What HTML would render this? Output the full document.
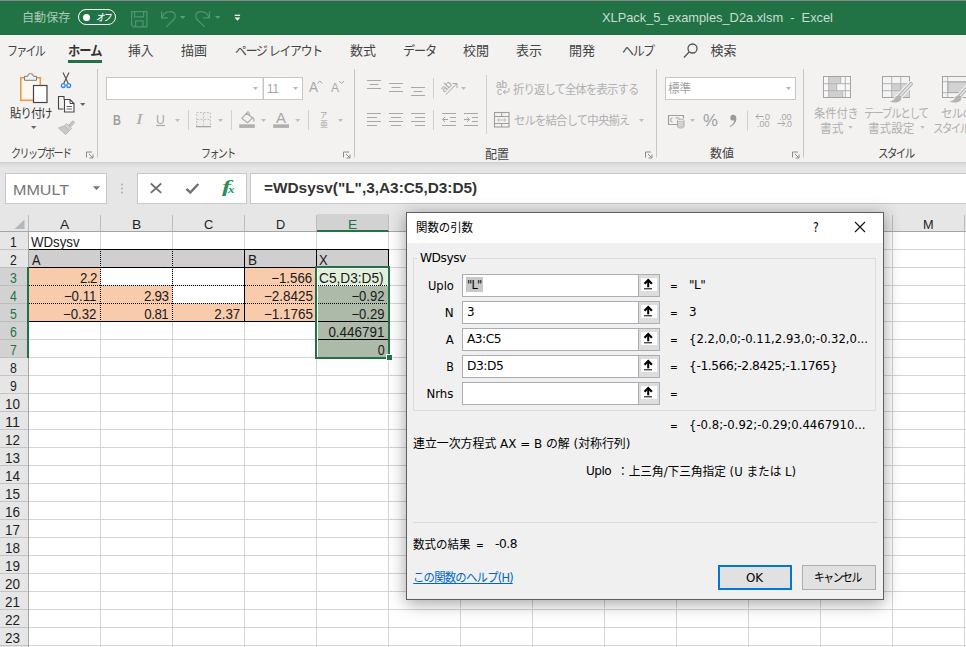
<!DOCTYPE html>
<html lang="ja">
<head>
<meta charset="utf-8">
<title>XLPack_5_examples_D2a.xlsm - Excel</title>
<style>
*{box-sizing:border-box;margin:0;padding:0}
html,body{width:966px;height:647px;overflow:hidden;background:#fff}
body{font-family:"Liberation Sans","Noto Sans CJK JP",sans-serif;font-size:12px;color:#222;position:relative}
.a{position:absolute}
.t{position:absolute;white-space:nowrap}
svg{position:absolute;overflow:visible}
.dj{font-family:"DejaVu Sans","Noto Sans CJK JP",sans-serif}
</style>
</head>
<body>
<div class="a" style="left:0;top:0;width:966px;height:35px;background:#217346;border-top:1px solid #8a8888"></div>
<div class="t" style="left:22.3px;top:11.5px;font-size:12px;line-height:12px;color:#a9cab8;transform:scaleX(1.01);transform-origin:0 50%;">自動保存</div>
<div class="a" style="left:78px;top:9px;width:38px;height:16px;border:1px solid #fff;border-radius:8px"></div>
<div class="a" style="left:82.500px;top:13.500px;width:7px;height:7px;border-radius:4px;background:#fff"></div>
<div class="t" style="left:95.8px;top:12.5px;font-size:10px;line-height:10px;color:#fff;letter-spacing:-1.6px;transform:scaleX(0.833);transform-origin:0 50%;font-style:italic;font-weight:500;">オフ</div>
<svg style="left:0;top:0" width="260" height="35" viewBox="0 0 260 35" fill="none" stroke="#4f9671" stroke-width="1.200">
<path d="M131.600 11.700h15.300v15.200h-13.300l-2-2z"/><path d="M134.600 11.700v5.200h9v-5.200M135.600 26.900v-6h7.400v6"/>
<path d="M161.600 11.400v6.400h6.300M162 17.400C163.500 13.800 167 11.700 170 11.700C173 11.700 175.200 13.300 175.200 16C175.200 18 174.300 19.300 173 20.500L166.200 26.900"/>
<path d="M180 16h5.400l-2.700 2.900z" fill="#5a9d7c" stroke="none"/>
<path d="M209.500 11.400v6.400h-6.300M209.100 17.400C207.500 13.800 204 11.700 201 11.700C198 11.700 195.800 13.300 195.800 16C195.800 18 196.700 19.300 198 20.500L204.800 26.900"/>
<path d="M215 16h5.400l-2.700 2.900z" fill="#5a9d7c" stroke="none"/>
<path d="M234.700 15.300h5.400" stroke="#fff" stroke-width="1.200"/><path d="M234.500 17.500h5.800l-2.900 3.300z" fill="#fff" stroke="none"/>
</svg>
<div class="t" style="left:602px;top:10.75px;font-size:13.5px;line-height:13.5px;color:#c9ddd1;transform:scaleX(0.95);transform-origin:0 50%;">XLPack_5_examples_D2a.xlsm&nbsp; -&nbsp; Excel</div>
<div class="a" style="left:0;top:35px;width:966px;height:127px;background:#f3f2f1"></div>
<div class="t" style="left:7px;top:43.5px;font-size:13px;line-height:13px;color:#444;letter-spacing:-2.08px;transform:scaleX(0.847);transform-origin:0 50%;">ファイル</div>
<div class="t" style="left:68px;top:43.5px;font-size:13px;line-height:13px;color:#333;letter-spacing:-1.025px;transform:scaleX(0.942);transform-origin:0 50%;font-weight:bold;">ホーム</div>
<div class="a" style="left:68px;top:60px;width:34px;height:3px;background:#217346"></div>
<div class="t" style="left:128px;top:43.5px;font-size:13px;line-height:13px;color:#444;transform:scaleX(0.98);transform-origin:0 50%;">挿入</div>
<div class="t" style="left:181px;top:43.5px;font-size:13px;line-height:13px;color:#444;">描画</div>
<div class="t" style="left:235px;top:43.5px;font-size:13px;line-height:13px;color:#444;letter-spacing:-1.357px;transform:scaleX(0.914);transform-origin:0 50%;">ページ レイアウト</div>
<div class="t" style="left:350px;top:43.5px;font-size:13px;line-height:13px;color:#444;">数式</div>
<div class="t" style="left:403px;top:43.5px;font-size:13px;line-height:13px;color:#444;letter-spacing:-1.203px;transform:scaleX(0.932);transform-origin:0 50%;">データ</div>
<div class="t" style="left:463px;top:43.5px;font-size:13px;line-height:13px;color:#444;">校閲</div>
<div class="t" style="left:516px;top:43.5px;font-size:13px;line-height:13px;color:#444;">表示</div>
<div class="t" style="left:569px;top:43.5px;font-size:13px;line-height:13px;color:#444;">開発</div>
<div class="t" style="left:622px;top:43.5px;font-size:13px;line-height:13px;color:#444;letter-spacing:-1.403px;transform:scaleX(0.919);transform-origin:0 50%;">ヘルプ</div>
<svg style="left:682px;top:42px" width="18" height="18" viewBox="0 0 18 18" fill="none" stroke="#555" stroke-width="1.300"><circle cx="10.500" cy="6.500" r="4.500"/><path d="M7.300 9.700L2 15.500"/></svg>
<div class="t" style="left:710.5px;top:43.5px;font-size:13px;line-height:13px;color:#444;">検索</div>
<svg style="left:0;top:0" width="966" height="170" viewBox="0 0 966 170">
<rect x="20.800" y="77.800" width="19.500" height="22.500" fill="#fcf7f1" stroke="#ee9a45" stroke-width="1.600"/>
<path d="M24.500 80.300v-4h3.200a2.800 2.800 0 0 1 5.600 0h3.200v4z" fill="#f3f2f1" stroke="#7a7a7a" stroke-width="1"/>
<rect x="33.500" y="85.500" width="13.500" height="17" fill="#fff" stroke="#444" stroke-width="1.200"/>
<path d="M31 126h5.4l-2.7 3z" fill="#666" stroke="none"/>
<path d="M63 72.500l5.300 11M69 72.500l-5.300 11" stroke="#555" stroke-width="1.200" fill="none"/>
<circle cx="63.300" cy="85.600" r="1.900" fill="none" stroke="#2e8bdc" stroke-width="1.300"/><circle cx="68.700" cy="85.600" r="1.900" fill="none" stroke="#2e8bdc" stroke-width="1.300"/>
<path d="M64 99.500v-3h-5.500v12.500h5" fill="none" stroke="#444" stroke-width="1.100"/>
<path d="M64.500 99.500h5.500l4 4v8.500h-9.500z" fill="#fff" stroke="#444" stroke-width="1.100"/>
<path d="M70 99.500v4h4" fill="none" stroke="#444" stroke-width="1"/>
<path d="M66.5 106.5H72" stroke="#666" stroke-width="1" fill="none"/><path d="M66.5 109H72" stroke="#666" stroke-width="1" fill="none"/>
<path d="M80 103h5.4l-2.7 3z" fill="#666" stroke="none"/>
<path d="M72.800 120.800l-4.200 4.300 1.800 1.800 4.300-4.200z" fill="#c4c4c4" stroke="#b0b0b0" stroke-width="0.800"/>
<path d="M66.500 123.500l5 5-1.800 1.800-5-5z" fill="#d6d6d6" stroke="#b0b0b0" stroke-width="0.800"/>
<path d="M64.300 125.800l-5.800 2.200 7 6.500 3.800-3.700z" fill="#c9c9c9" stroke="#b0b0b0" stroke-width="0.800"/>
<path d="M86.5 157.5v-5.500h5.500" fill="none" stroke="#8a8a8a" stroke-width="1"/><path d="M89 154l3.500 3.500m0.500 -3v3.500h-3.500" fill="none" stroke="#8a8a8a" stroke-width="1"/>
<path d="M97.5 69V157.5" stroke="#c8c6c4" stroke-width="1" fill="none"/>
<rect x="106.500" y="77.500" width="156.500" height="22" fill="#fff" stroke="#c6c6c6"/>
<rect x="263.500" y="77.500" width="39" height="22" fill="#fff" stroke="#c6c6c6"/>
<path d="M253 87h5l-2.5 3z" fill="#b5b5b5" stroke="none"/>
<path d="M293 87h5l-2.5 3z" fill="#b5b5b5" stroke="none"/>
<path d="M317.500 83.500l2.400-2.600 2.400 2.600" fill="none" stroke="#a8a8a8" stroke-width="1"/>
<path d="M339.200 81l2.400 2.600 2.400-2.600" fill="none" stroke="#a8a8a8" stroke-width="1"/>
<path d="M156.2 125.5H165" stroke="#a8a8a8" stroke-width="1.2" fill="none"/>
<path d="M175 119h5l-2.5 3z" fill="#bdbdbd" stroke="none"/>
<path d="M188.5 110V130" stroke="#d2d0ce" stroke-width="1" fill="none"/>
<rect x="196.500" y="112.500" width="14" height="14" fill="#eeedec" stroke="#c4c4c4" stroke-width="1" stroke-dasharray="2 1.500"/>
<path d="M203.500 113v13M197 119.500h13" stroke="#c4c4c4" stroke-width="1" stroke-dasharray="2 1.500" fill="none"/>
<path d="M196 126.7H211" stroke="#a0a0a0" stroke-width="1.2" fill="none"/>
<path d="M218 119h5l-2.5 3z" fill="#bdbdbd" stroke="none"/>
<path d="M231.5 110V130" stroke="#d2d0ce" stroke-width="1" fill="none"/>
<path d="M241.800 118.400l4.700-5.100 6 4.500-4.900 4.900z" fill="none" stroke="#a8a8a8" stroke-width="1.100" stroke-linejoin="round"/>
<path d="M246.700 114.800v-1.700a1.300 1.300 0 0 1 2.600 0v2.200" fill="none" stroke="#a8a8a8" stroke-width="1"/>
<path d="M252.600 117.600c1.300.9 1.700 2.200 1.300 3.900" fill="none" stroke="#a8a8a8" stroke-width="1.200"/>
<rect x="239.200" y="124.300" width="15.600" height="3.600" fill="#b1afad"/>
<path d="M261 119h5l-2.5 3z" fill="#bdbdbd" stroke="none"/>
<rect x="273.200" y="124.300" width="15.800" height="3.600" fill="#b1afad"/>
<path d="M295.2 119h5l-2.5 3z" fill="#bdbdbd" stroke="none"/>
<path d="M308.5 110V130" stroke="#d2d0ce" stroke-width="1" fill="none"/>
<path d="M338 119h5l-2.5 3z" fill="#bdbdbd" stroke="none"/>
<path d="M343.5 157.5v-5.500h5.500" fill="none" stroke="#8a8a8a" stroke-width="1"/><path d="M346 154l3.500 3.500m0.500 -3v3.500h-3.500" fill="none" stroke="#8a8a8a" stroke-width="1"/>
<path d="M354.5 69V157.5" stroke="#c8c6c4" stroke-width="1" fill="none"/>
</svg>
<div class="t" style="left:10px;top:107.5px;font-size:12px;line-height:12px;color:#333;letter-spacing:-0.932px;transform:scaleX(0.944);transform-origin:0 50%;">貼り付け</div>
<div class="t" style="left:11px;top:148px;font-size:12px;line-height:12px;color:#444;letter-spacing:-1.92px;transform:scaleX(0.842);transform-origin:0 50%;">クリップボード</div>
<div class="t" style="left:266.8px;top:82.5px;font-size:12px;line-height:12px;color:#a3a3a3;transform:scaleX(0.962);transform-origin:0 50%;">11</div>
<div class="t" style="left:309.4px;top:80.3px;font-size:14px;line-height:14px;color:#a8a8a8;transform:scaleX(0.963);transform-origin:0 50%;">A</div>
<div class="t" style="left:331px;top:81.55px;font-size:12.5px;line-height:12.5px;color:#a8a8a8;transform:scaleX(0.959);transform-origin:0 50%;">A</div>
<div class="t" style="left:113.3px;top:112.8px;font-size:14px;line-height:14px;color:#a0a0a0;transform:scaleX(0.78);transform-origin:0 50%;font-weight:bold;">B</div>
<div class="t" style="left:136px;top:112.8px;font-size:14px;line-height:14px;color:#a8a8a8;transform:scaleX(1.413);transform-origin:0 50%;font-family:'Liberation Serif',serif;font-style:italic;">I</div>
<div class="t" style="left:156.2px;top:112.55px;font-size:13.5px;line-height:13.5px;color:#a8a8a8;transform:scaleX(0.903);transform-origin:0 50%;">U</div>
<div class="t" style="left:276px;top:110.55px;font-size:14.5px;line-height:14.5px;color:#a8a8a8;transform:scaleX(1.034);transform-origin:0 50%;">A</div>
<div class="t" style="left:320.3px;top:111.25px;font-size:8.5px;line-height:8.5px;color:#a8a8a8;transform:scaleX(0.857);transform-origin:0 50%;">ア</div>
<div class="t" style="left:319.8px;top:119.55px;font-size:8.5px;line-height:8.5px;color:#a8a8a8;transform:scaleX(0.939);transform-origin:0 50%;">亜</div>
<div class="t" style="left:201.2px;top:148px;font-size:12px;line-height:12px;color:#444;letter-spacing:-1.92px;transform:scaleX(0.833);transform-origin:0 50%;">フォント</div>
<svg style="left:0;top:0" width="966" height="170" viewBox="0 0 966 170">
<path d="M367 80.5H381" stroke="#a8a8a8" stroke-width="1" fill="none"/><path d="M369.5 84.5H378.5" stroke="#a8a8a8" stroke-width="1" fill="none"/><path d="M367 88.5H381" stroke="#a8a8a8" stroke-width="1" fill="none"/>
<path d="M389 83.5H403" stroke="#a8a8a8" stroke-width="1" fill="none"/><path d="M391.5 87.5H400.5" stroke="#a8a8a8" stroke-width="1" fill="none"/><path d="M389 91.5H403" stroke="#a8a8a8" stroke-width="1" fill="none"/>
<path d="M411 87.5H425" stroke="#a8a8a8" stroke-width="1" fill="none"/><path d="M413.5 91.5H422.5" stroke="#a8a8a8" stroke-width="1" fill="none"/><path d="M411 95.5H425" stroke="#a8a8a8" stroke-width="1" fill="none"/>
<path d="M433.5 78V98.5" stroke="#d2d0ce" stroke-width="1" fill="none"/>
<path d="M446 94.500L456.500 84M452.500 83.500h4.500v4.500" fill="none" stroke="#a8a8a8" stroke-width="1"/>
<path d="M461 87h5l-2.5 3z" fill="#bdbdbd" stroke="none"/>
<path d="M367 113.5H381" stroke="#a8a8a8" stroke-width="1" fill="none"/><path d="M367 117.5H377" stroke="#a8a8a8" stroke-width="1" fill="none"/><path d="M367 121.5H381" stroke="#a8a8a8" stroke-width="1" fill="none"/><path d="M367 125.5H377" stroke="#a8a8a8" stroke-width="1" fill="none"/>
<path d="M389 113.5H403" stroke="#a8a8a8" stroke-width="1" fill="none"/><path d="M391 117.5H401" stroke="#a8a8a8" stroke-width="1" fill="none"/><path d="M389 121.5H403" stroke="#a8a8a8" stroke-width="1" fill="none"/><path d="M391 125.5H401" stroke="#a8a8a8" stroke-width="1" fill="none"/>
<path d="M411 113.5H425" stroke="#a8a8a8" stroke-width="1" fill="none"/><path d="M415 117.5H425" stroke="#a8a8a8" stroke-width="1" fill="none"/><path d="M411 121.5H425" stroke="#a8a8a8" stroke-width="1" fill="none"/><path d="M415 125.5H425" stroke="#a8a8a8" stroke-width="1" fill="none"/>
<path d="M433.5 110V130" stroke="#d2d0ce" stroke-width="1" fill="none"/>
<path d="M442 113.5H456" stroke="#a8a8a8" stroke-width="1" fill="none"/><path d="M450 117.5H456" stroke="#a8a8a8" stroke-width="1" fill="none"/><path d="M450 121.5H456" stroke="#a8a8a8" stroke-width="1" fill="none"/><path d="M442 125.5H456" stroke="#a8a8a8" stroke-width="1" fill="none"/>
<path d="M448 119.500h-5.500M445 117l-2.500 2.500 2.500 2.500" fill="none" stroke="#a8a8a8" stroke-width="1"/>
<path d="M464 113.5H478" stroke="#a8a8a8" stroke-width="1" fill="none"/><path d="M472 117.5H478" stroke="#a8a8a8" stroke-width="1" fill="none"/><path d="M472 121.5H478" stroke="#a8a8a8" stroke-width="1" fill="none"/><path d="M464 125.5H478" stroke="#a8a8a8" stroke-width="1" fill="none"/>
<path d="M464 119.500h5.500M467 117l2.500 2.500-2.500 2.500" fill="none" stroke="#a8a8a8" stroke-width="1"/>
<path d="M486.5 75V134" stroke="#d2d0ce" stroke-width="1" fill="none"/>
<path d="M509 88v2.500q0 1.500-1.500 1.500h-4M505.500 90l-2.200 2 2.200 2" fill="none" stroke="#a8a8a8" stroke-width="1"/>
<rect x="494.500" y="112.500" width="14.500" height="14.500" fill="none" stroke="#9f9f9f" stroke-width="1.100"/>
<path d="M495 116.500h14M495 123.500h14M501.700 113v3.500M501.700 123.500v3.500" fill="none" stroke="#9f9f9f" stroke-width="1"/>
<path d="M497.500 120h8.500M499.300 118.300l-1.800 1.700 1.800 1.700M504.200 118.300l1.800 1.700-1.800 1.700" fill="none" stroke="#b5b5b5" stroke-width="0.900"/>
<path d="M639 119h5l-2.5 3z" fill="#bdbdbd" stroke="none"/>
<path d="M645.5 157.5v-5.500h5.500" fill="none" stroke="#8a8a8a" stroke-width="1"/><path d="M648 154l3.500 3.500m0.500 -3v3.500h-3.500" fill="none" stroke="#8a8a8a" stroke-width="1"/>
<path d="M656.5 69V157.5" stroke="#c8c6c4" stroke-width="1" fill="none"/>
<rect x="665.500" y="77.500" width="130" height="22" fill="#fff" stroke="#c6c6c6"/>
<path d="M786 87h5l-2.5 3z" fill="#b5b5b5" stroke="none"/>
<path d="M677 124.500h-8.500v-9h15v3" fill="none" stroke="#9f9f9f" stroke-width="1.200"/>
<path d="M672.500 118a2 2 0 0 0 0 4M675.500 118h4" fill="none" stroke="#9f9f9f" stroke-width="1"/>
<path d="M677.500 120.500v6c0 .9 1.500 1.500 3.300 1.500s3.200-.6 3.200-1.500v-6" fill="#e6e6e6" stroke="#a8a8a8" stroke-width="0.900"/>
<ellipse cx="680.700" cy="120.500" rx="3.200" ry="1.300" fill="#ededed" stroke="#a8a8a8" stroke-width="0.900"/>
<path d="M677.500 122.700c0 .9 1.500 1.400 3.300 1.400s3.200-.5 3.200-1.400M677.500 124.900c0 .9 1.500 1.400 3.300 1.400s3.200-.5 3.200-1.400" fill="none" stroke="#a8a8a8" stroke-width="0.800"/>
<path d="M690 119h5l-2.5 3z" fill="#bdbdbd" stroke="none"/>
<path d="M733.200 114.800a2.900 2.900 0 1 0 0 5.800c.4 0 .8-.1 1.100-.2c-.3 2.300-1.900 4.300-4.600 5.800l.5.800c4-1.800 6.200-5 6.200-8.400c0-2.300-1.300-3.800-3.200-3.800z" fill="#9a9a9a"/>
<path d="M747.5 110.5V130.5" stroke="#d2d0ce" stroke-width="1" fill="none"/>
<path d="M763.500 116.500h-7.500M758.700 113.800l-2.700 2.700 2.700 2.700" fill="none" stroke="#a8a8a8" stroke-width="1"/>
<path d="M777.500 123.500h7.500M782.300 120.800l2.700 2.700-2.700 2.700" fill="none" stroke="#a8a8a8" stroke-width="1"/>
<path d="M792.5 157.5v-5.500h5.500" fill="none" stroke="#8a8a8a" stroke-width="1"/><path d="M795 154l3.500 3.500m0.500 -3v3.500h-3.500" fill="none" stroke="#8a8a8a" stroke-width="1"/>
<path d="M803.5 69V157.5" stroke="#c8c6c4" stroke-width="1" fill="none"/>
<rect x="823.500" y="76.500" width="27" height="21" fill="#f7f7f7" stroke="#a3a3a3" stroke-width="1"/>
<rect x="829" y="77" width="11.500" height="6.500" fill="#cfcfcf"/><rect x="829" y="84" width="7.500" height="6.500" fill="#cfcfcf"/><rect x="829" y="91" width="13.500" height="6" fill="#cfcfcf"/>
<path d="M824 83.700h27M824 90.700h27M828.700 77v20.500M845.300 77v20.500M840.700 77v6.500M836.700 84v6.500M842.700 91v6.500" fill="none" stroke="#adadad" stroke-width="0.900"/>
<path d="M848.2 126h4.6l-2.3 2.8z" fill="#bdbdbd" stroke="none"/>
<rect x="882.500" y="76.500" width="27" height="21" fill="#f3f3f3" stroke="#a3a3a3" stroke-width="1"/>
<rect x="892" y="84" width="9" height="6.500" fill="#cfcfcf"/><rect x="901" y="84" width="8.500" height="13" fill="#d6d6d6"/><rect x="892" y="91" width="9" height="6" fill="#dedede"/>
<path d="M883 83.700h27M883 90.700h27M891.700 77v20.500M900.700 77v20.500" fill="none" stroke="#adadad" stroke-width="0.900"/>
<g transform="translate(0 0)"><path d="M911 84L899.500 96.300" stroke="#f3f2f1" stroke-width="6.200" stroke-linecap="round" fill="none"/><path d="M899.800 95.600c-2.500-.6-4.300.6-5 2.300c-.8 2-1.800 2.800-5.800 3.400c4.500 1.800 9 1.500 11.200-.6c1.500-1.500 1.700-3.600-.4-5.100z" fill="#f3f2f1" stroke="#f3f2f1" stroke-width="2"/><path d="M911 84L899.500 96.300" stroke="#a9a9a9" stroke-width="3.600" stroke-linecap="round" fill="none"/><path d="M911 84L900 95.800" stroke="#e2e2e2" stroke-width="1.900" stroke-linecap="round" fill="none"/><path d="M899.800 95.600c-2.500-.6-4.300.6-5 2.300c-.8 2-1.800 2.800-5.800 3.400c4.500 1.800 9 1.500 11.200-.6c1.500-1.500 1.700-3.600-.4-5.100z" fill="#b4b4b4"/></g>
<path d="M920.3 126h4.6l-2.3 2.8z" fill="#bdbdbd" stroke="none"/>
<rect x="942.500" y="76.500" width="27.500" height="21" fill="#f3f3f3" stroke="#a3a3a3" stroke-width="1"/>
<rect x="948" y="82" width="20" height="10.500" fill="#d2d2d2" stroke="#adadad" stroke-width="0.900"/>
<path d="M943 81.700h27M943 92.700h27M947.700 77v20.500" fill="none" stroke="#adadad" stroke-width="0.900"/>
<g transform="translate(60 0)"><path d="M911 84L899.500 96.300" stroke="#f3f2f1" stroke-width="6.200" stroke-linecap="round" fill="none"/><path d="M899.800 95.600c-2.500-.6-4.300.6-5 2.300c-.8 2-1.800 2.800-5.800 3.400c4.500 1.800 9 1.500 11.200-.6c1.500-1.500 1.700-3.600-.4-5.100z" fill="#f3f2f1" stroke="#f3f2f1" stroke-width="2"/><path d="M911 84L899.500 96.300" stroke="#a9a9a9" stroke-width="3.600" stroke-linecap="round" fill="none"/><path d="M911 84L900 95.800" stroke="#e2e2e2" stroke-width="1.900" stroke-linecap="round" fill="none"/><path d="M899.800 95.600c-2.500-.6-4.300.6-5 2.300c-.8 2-1.800 2.800-5.800 3.400c4.500 1.800 9 1.500 11.200-.6c1.500-1.500 1.700-3.600-.4-5.100z" fill="#b4b4b4"/></g>
</svg>
<div class="t" style="left:439.500px;top:80.500px;font-size:10.500px;line-height:10.500px;color:#a8a8a8;transform:rotate(-45deg);transform-origin:50% 50%">ab</div>
<div class="t" style="left:496.4px;top:78.75px;font-size:10.5px;line-height:10.5px;color:#a8a8a8;transform:scaleX(0.958);transform-origin:0 50%;">ab</div>
<div class="t" style="left:496.6px;top:86.35px;font-size:10.5px;line-height:10.5px;color:#a8a8a8;transform:scaleX(0.952);transform-origin:0 50%;">c</div>
<div class="t" style="left:513.2px;top:84px;font-size:12px;line-height:12px;color:#b0b0b0;letter-spacing:-0.908px;transform:scaleX(0.945);transform-origin:0 50%;">折り返して全体を表示する</div>
<div class="t" style="left:513.5px;top:115px;font-size:12px;line-height:12px;color:#b0b0b0;letter-spacing:-0.881px;transform:scaleX(0.947);transform-origin:0 50%;">セルを結合して中央揃え</div>
<div class="t" style="left:485px;top:148.5px;font-size:12px;line-height:12px;color:#444;">配置</div>
<div class="t" style="left:668.2px;top:83px;font-size:12px;line-height:12px;color:#a3a3a3;transform:scaleX(0.966);transform-origin:0 50%;">標準</div>
<div class="t" style="left:702.7px;top:111.5px;font-size:17px;line-height:17px;color:#9f9f9f;transform:scaleX(0.985);transform-origin:0 50%;">%</div>
<div class="t" style="left:762px;top:111.55px;font-size:9.5px;line-height:9.5px;color:#a8a8a8;transform:scaleX(1.008);transform-origin:0 50%;">.0</div>
<div class="t" style="left:757.3px;top:119.45px;font-size:9.5px;line-height:9.5px;color:#a8a8a8;transform:scaleX(0.961);transform-origin:0 50%;">.00</div>
<div class="t" style="left:779.3px;top:111.55px;font-size:9.5px;line-height:9.5px;color:#a8a8a8;transform:scaleX(0.961);transform-origin:0 50%;">.00</div>
<div class="t" style="left:785.3px;top:119.45px;font-size:9.5px;line-height:9.5px;color:#a8a8a8;letter-spacing:-0.371px;transform:scaleX(0.931);transform-origin:0 50%;">.0</div>
<div class="t" style="left:710px;top:148.4px;font-size:12px;line-height:12px;color:#444;">数値</div>
<div class="t" style="left:814.1px;top:108.2px;font-size:12px;line-height:12px;color:#b0b0b0;transform:scaleX(0.933);transform-origin:0 50%;">条件付き</div>
<div class="t" style="left:820.3px;top:123.2px;font-size:12px;line-height:12px;color:#b0b0b0;transform:scaleX(0.979);transform-origin:0 50%;">書式</div>
<div class="t" style="left:864.4px;top:108.2px;font-size:12px;line-height:12px;color:#b0b0b0;letter-spacing:-1.656px;transform:scaleX(0.892);transform-origin:0 50%;">テーブルとして</div>
<div class="t" style="left:868.4px;top:123.2px;font-size:12px;line-height:12px;color:#b0b0b0;transform:scaleX(0.966);transform-origin:0 50%;">書式設定</div>
<div class="t" style="left:941.3px;top:108.2px;font-size:12px;line-height:12px;color:#b0b0b0;letter-spacing:-0.763px;transform:scaleX(0.955);transform-origin:0 50%;">セルの</div>
<div class="t" style="left:933.2px;top:123.2px;font-size:12px;line-height:12px;color:#b0b0b0;letter-spacing:-1.862px;transform:scaleX(0.878);transform-origin:0 50%;">スタイル</div>
<div class="t" style="left:878.2px;top:148.2px;font-size:12px;line-height:12px;color:#444;letter-spacing:-1.862px;transform:scaleX(0.878);transform-origin:0 50%;">スタイル</div>
<div class="a" style="left:0;top:162px;width:966px;height:51px;background:linear-gradient(#cdcdcd 0,#dadada 2px,#e3e3e3 5px,#e6e6e6 7px)"></div>
<div class="a" style="left:5px;top:173px;width:102px;height:31px;background:#fff;border:1px solid #c8c8c8"></div>
<div class="t" style="left:13px;top:182.95px;font-size:14.5px;line-height:14.5px;color:#767676;transform:scaleX(1.109);transform-origin:0 50%;">MMULT</div>
<div class="a" style="left:137px;top:173px;width:110px;height:31px;background:#fff;border:1px solid #c8c8c8"></div>
<div class="a" style="left:250px;top:173px;width:720px;height:31px;background:#fff;border:1px solid #c8c8c8"></div>
<svg style="left:0;top:160px" width="300" height="50" viewBox="0 160 300 50">
<path d="M92.800 186.300h7.400l-3.700 3.700z" fill="#777"/>
<circle cx="122" cy="184.500" r="0.900" fill="#aaa"/><circle cx="122" cy="188.500" r="0.900" fill="#aaa"/><circle cx="122" cy="192.500" r="0.900" fill="#aaa"/>
<path d="M150.800 183.500l10.400 9.400M161.200 183.500l-10.400 9.400" stroke="#6e6e6e" stroke-width="1.800" fill="none"/>
<path d="M186.500 188.800l3.800 3.700 8-8.500" stroke="#747474" stroke-width="2.500" fill="none"/>
</svg>
<div class="t" style="left:222.3px;top:179px;font-size:16px;line-height:16px;color:#2e8f5a;transform:scaleX(1.689);transform-origin:0 50%;font-family:'Liberation Serif',serif;font-weight:bold;"><i>f</i></div>
<div class="t" style="left:227.8px;top:184.1px;font-size:11px;line-height:11px;color:#2e8f5a;transform:scaleX(1.182);transform-origin:0 50%;font-family:'Liberation Serif',serif;font-weight:bold;"><i>x</i></div>
<div class="t" style="left:264px;top:179.65px;font-size:15.5px;line-height:15.5px;color:#333;transform:scaleX(0.992);transform-origin:0 50%;font-weight:bold;">=WDsysv("L",3,A3:C5,D3:D5)</div>
<div class="a" style="left:29px;top:232px;width:937px;height:415px;background-color:#fff;background-image:linear-gradient(90deg,transparent 71px,#d4d4d4 71px),linear-gradient(transparent 17px,#d4d4d4 17px);background-size:72px 18px,72px 18px"></div>
<div class="a" style="left:0;top:213px;width:966px;height:19px;background:#e6e6e6;border-bottom:1px solid #a6a6a6"></div>
<div class="a" style="left:0;top:232px;width:29px;height:415px;background-color:#e6e6e6;background-image:linear-gradient(transparent 17px,#c4c4c4 17px);background-size:29px 18px;border-right:1px solid #a6a6a6"></div>
<div class="a" style="left:317px;top:214px;width:72px;height:18px;background:#d2d2d2;border-bottom:2px solid #217346"></div>
<div class="a" style="left:0;top:267px;width:29px;height:91px;background-color:#d2d2d2;background-position:0 1px;background-image:linear-gradient(transparent 17px,#bdbdbd 17px);background-size:29px 18px;border-right:2px solid #217346"></div>
<svg style="left:0;top:205px" width="966" height="442" viewBox="0 205 966 442" shape-rendering="crispEdges">
<path d="M24.500 219.500v9.500h-10z" fill="#b7b7b7" shape-rendering="auto"/>
<path d="M28.5 215V231" stroke="#bdbdbd" stroke-width="1" fill="none"/>
<path d="M100.5 215V231" stroke="#bdbdbd" stroke-width="1" fill="none"/>
<path d="M172.5 215V231" stroke="#bdbdbd" stroke-width="1" fill="none"/>
<path d="M244.5 215V231" stroke="#bdbdbd" stroke-width="1" fill="none"/>
<path d="M316.5 215V231" stroke="#bdbdbd" stroke-width="1" fill="none"/>
<path d="M388.5 215V231" stroke="#bdbdbd" stroke-width="1" fill="none"/>
<path d="M460.5 215V231" stroke="#bdbdbd" stroke-width="1" fill="none"/>
<path d="M532.5 215V231" stroke="#bdbdbd" stroke-width="1" fill="none"/>
<path d="M604.5 215V231" stroke="#bdbdbd" stroke-width="1" fill="none"/>
<path d="M676.5 215V231" stroke="#bdbdbd" stroke-width="1" fill="none"/>
<path d="M748.5 215V231" stroke="#bdbdbd" stroke-width="1" fill="none"/>
<path d="M820.5 215V231" stroke="#bdbdbd" stroke-width="1" fill="none"/>
<path d="M892.5 215V231" stroke="#bdbdbd" stroke-width="1" fill="none"/>
<path d="M964.5 215V231" stroke="#bdbdbd" stroke-width="1" fill="none"/>
<rect x="29" y="250" width="359" height="17" fill="#d0cece"/>
<rect x="29" y="268" width="71" height="53" fill="#f8cbad"/>
<rect x="101" y="286" width="71" height="35" fill="#f8cbad"/>
<rect x="173" y="304" width="71" height="17" fill="#f8cbad"/>
<rect x="245" y="268" width="71" height="53" fill="#f8cbad"/>
<rect x="29" y="286" width="143" height="17" fill="#f8cbad"/>
<rect x="29" y="304" width="286" height="17" fill="#f8cbad"/>
<path d="M29 285.500H316M29 303.500H316" stroke="#000" stroke-width="1" stroke-dasharray="1 1" fill="none"/>
<path d="M100.500 251V321M172.500 251V321" stroke="#000" stroke-width="1" stroke-dasharray="1 1" fill="none"/>
<path d="M29 249.500H389M29 267.500H316M29 321.500H316" stroke="#000" stroke-width="1" fill="none"/>
<path d="M244.500 249V322M316.500 249V268M388.500 249V268" stroke="#000" stroke-width="1" fill="none"/>
<rect x="316" y="267" width="73" height="90.500" fill="#fff"/>
<rect x="318" y="269" width="70" height="16" fill="#e2efda"/>
<rect x="318" y="286" width="70" height="71" fill="#adb9a9"/>
<path d="M318 285.500H388M318 303.500H388" stroke="#000" stroke-width="1" stroke-dasharray="1 1" fill="none"/>
<path d="M318 321.500H388M318 339.500H388" stroke="#000" stroke-width="1" fill="none"/>
<rect x="316" y="267" width="73" height="90.500" fill="none" stroke="#217346" stroke-width="2"/>
<rect x="386" y="354.500" width="6" height="6" fill="#217346" stroke="#fff" stroke-width="1"/>
</svg>
<div class="t" style="left:59.9px;top:217.5px;font-size:13px;line-height:13px;color:#1f1f1f;transform:scaleX(1.061);transform-origin:0 50%;">A</div>
<div class="t" style="left:131.9px;top:217.5px;font-size:13px;line-height:13px;color:#1f1f1f;transform:scaleX(1.061);transform-origin:0 50%;">B</div>
<div class="t" style="left:203.9px;top:217.5px;font-size:13px;line-height:13px;color:#1f1f1f;transform:scaleX(0.98);transform-origin:0 50%;">C</div>
<div class="t" style="left:275.9px;top:217.5px;font-size:13px;line-height:13px;color:#1f1f1f;transform:scaleX(0.98);transform-origin:0 50%;">D</div>
<div class="t" style="left:347.9px;top:217.5px;font-size:13px;line-height:13px;color:#217346;transform:scaleX(1.061);transform-origin:0 50%;">E</div>
<div class="t" style="left:419.9px;top:217.5px;font-size:13px;line-height:13px;color:#1f1f1f;transform:scaleX(1.157);transform-origin:0 50%;">F</div>
<div class="t" style="left:491.9px;top:217.5px;font-size:13px;line-height:13px;color:#1f1f1f;transform:scaleX(0.909);transform-origin:0 50%;">G</div>
<div class="t" style="left:563.9px;top:217.5px;font-size:13px;line-height:13px;color:#1f1f1f;transform:scaleX(0.98);transform-origin:0 50%;">H</div>
<div class="t" style="left:639px;top:217.5px;font-size:13px;line-height:13px;color:#1f1f1f;transform:scaleX(0.828);transform-origin:0 50%;">I</div>
<div class="t" style="left:707.9px;top:217.5px;font-size:13px;line-height:13px;color:#1f1f1f;transform:scaleX(1.415);transform-origin:0 50%;">J</div>
<div class="t" style="left:779.9px;top:217.5px;font-size:13px;line-height:13px;color:#1f1f1f;transform:scaleX(1.061);transform-origin:0 50%;">K</div>
<div class="t" style="left:851.9px;top:217.5px;font-size:13px;line-height:13px;color:#1f1f1f;transform:scaleX(1.272);transform-origin:0 50%;">L</div>
<div class="t" style="left:923.2px;top:217.5px;font-size:13px;line-height:13px;color:#1f1f1f;transform:scaleX(0.978);transform-origin:0 50%;">M</div>
<div class="t" style="left:9.5px;top:234.6px;font-size:14px;line-height:14px;color:#1f1f1f;transform:scaleX(0.872);transform-origin:0 50%;">1</div>
<div class="t" style="left:9.5px;top:252.6px;font-size:14px;line-height:14px;color:#1f1f1f;transform:scaleX(0.872);transform-origin:0 50%;">2</div>
<div class="t" style="left:9.5px;top:270.6px;font-size:14px;line-height:14px;color:#217346;transform:scaleX(0.872);transform-origin:0 50%;">3</div>
<div class="t" style="left:9.5px;top:288.6px;font-size:14px;line-height:14px;color:#217346;transform:scaleX(0.872);transform-origin:0 50%;">4</div>
<div class="t" style="left:9.5px;top:306.6px;font-size:14px;line-height:14px;color:#217346;transform:scaleX(0.872);transform-origin:0 50%;">5</div>
<div class="t" style="left:9.5px;top:324.6px;font-size:14px;line-height:14px;color:#217346;transform:scaleX(0.872);transform-origin:0 50%;">6</div>
<div class="t" style="left:9.5px;top:342.6px;font-size:14px;line-height:14px;color:#217346;transform:scaleX(0.872);transform-origin:0 50%;">7</div>
<div class="t" style="left:9.5px;top:360.6px;font-size:14px;line-height:14px;color:#1f1f1f;transform:scaleX(0.872);transform-origin:0 50%;">8</div>
<div class="t" style="left:9.5px;top:378.6px;font-size:14px;line-height:14px;color:#1f1f1f;transform:scaleX(0.872);transform-origin:0 50%;">9</div>
<div class="t" style="left:5.4px;top:396.6px;font-size:14px;line-height:14px;color:#1f1f1f;transform:scaleX(0.963);transform-origin:0 50%;">10</div>
<div class="t" style="left:5.4px;top:414.6px;font-size:14px;line-height:14px;color:#1f1f1f;transform:scaleX(1.031);transform-origin:0 50%;">11</div>
<div class="t" style="left:5.4px;top:432.6px;font-size:14px;line-height:14px;color:#1f1f1f;transform:scaleX(0.963);transform-origin:0 50%;">12</div>
<div class="t" style="left:5.4px;top:450.6px;font-size:14px;line-height:14px;color:#1f1f1f;transform:scaleX(0.963);transform-origin:0 50%;">13</div>
<div class="t" style="left:5.4px;top:468.6px;font-size:14px;line-height:14px;color:#1f1f1f;transform:scaleX(0.963);transform-origin:0 50%;">14</div>
<div class="t" style="left:5.4px;top:486.6px;font-size:14px;line-height:14px;color:#1f1f1f;transform:scaleX(0.963);transform-origin:0 50%;">15</div>
<div class="t" style="left:5.4px;top:504.6px;font-size:14px;line-height:14px;color:#1f1f1f;transform:scaleX(0.963);transform-origin:0 50%;">16</div>
<div class="t" style="left:5.4px;top:522.6px;font-size:14px;line-height:14px;color:#1f1f1f;transform:scaleX(0.963);transform-origin:0 50%;">17</div>
<div class="t" style="left:5.4px;top:540.6px;font-size:14px;line-height:14px;color:#1f1f1f;transform:scaleX(0.963);transform-origin:0 50%;">18</div>
<div class="t" style="left:5.4px;top:558.6px;font-size:14px;line-height:14px;color:#1f1f1f;transform:scaleX(0.963);transform-origin:0 50%;">19</div>
<div class="t" style="left:5.4px;top:576.6px;font-size:14px;line-height:14px;color:#1f1f1f;transform:scaleX(0.963);transform-origin:0 50%;">20</div>
<div class="t" style="left:5.4px;top:594.6px;font-size:14px;line-height:14px;color:#1f1f1f;transform:scaleX(0.963);transform-origin:0 50%;">21</div>
<div class="t" style="left:5.4px;top:612.6px;font-size:14px;line-height:14px;color:#1f1f1f;transform:scaleX(0.963);transform-origin:0 50%;">22</div>
<div class="t" style="left:5.4px;top:630.6px;font-size:14px;line-height:14px;color:#1f1f1f;transform:scaleX(0.963);transform-origin:0 50%;">23</div>
<div class="t" style="left:31px;top:234.5px;font-size:14px;line-height:14px;color:#1a1a1a;transform:scaleX(0.945);transform-origin:0 50%;">WDsysv</div>
<div class="t" style="left:31.5px;top:252.5px;font-size:14px;line-height:14px;color:#1a1a1a;transform:scaleX(0.91);transform-origin:0 50%;">A</div>
<div class="t" style="left:247.5px;top:252.5px;font-size:14px;line-height:14px;color:#1a1a1a;transform:scaleX(0.963);transform-origin:0 50%;">B</div>
<div class="t" style="left:319px;top:252.5px;font-size:14px;line-height:14px;color:#1a1a1a;transform:scaleX(0.931);transform-origin:0 50%;">X</div>
<div class="t" style="right:869.5px;top:270.5px;font-size:14px;line-height:14px;color:#1a1a1a;letter-spacing:-0.494px;transform:scaleX(0.945);transform-origin:100% 50%;">2.2</div>
<div class="t" style="right:869.5px;top:288.5px;font-size:14px;line-height:14px;color:#1a1a1a;transform:scaleX(0.945);transform-origin:100% 50%;">−0.11</div>
<div class="t" style="right:797.5px;top:288.5px;font-size:14px;line-height:14px;color:#1a1a1a;letter-spacing:-0.412px;transform:scaleX(0.957);transform-origin:100% 50%;">2.93</div>
<div class="t" style="right:869.5px;top:306.5px;font-size:14px;line-height:14px;color:#1a1a1a;transform:scaleX(0.945);transform-origin:100% 50%;">−0.32</div>
<div class="t" style="right:797.5px;top:306.5px;font-size:14px;line-height:14px;color:#1a1a1a;letter-spacing:-0.487px;transform:scaleX(0.949);transform-origin:100% 50%;">0.81</div>
<div class="t" style="right:725.5px;top:306.5px;font-size:14px;line-height:14px;color:#1a1a1a;transform:scaleX(0.954);transform-origin:100% 50%;">2.37</div>
<div class="t" style="right:653.5px;top:270.5px;font-size:14px;line-height:14px;color:#1a1a1a;transform:scaleX(0.949);transform-origin:100% 50%;">−1.566</div>
<div class="t" style="right:653.5px;top:288.5px;font-size:14px;line-height:14px;color:#1a1a1a;transform:scaleX(0.961);transform-origin:100% 50%;">−2.8425</div>
<div class="t" style="right:653.5px;top:306.5px;font-size:14px;line-height:14px;color:#1a1a1a;transform:scaleX(0.961);transform-origin:100% 50%;">−1.1765</div>
<div class="t" style="left:318.8px;top:270.5px;font-size:14px;line-height:14px;color:#1a1a1a;transform:scaleX(0.978);transform-origin:0 50%;">C5,D3:D5)</div>
<div class="t" style="right:581.5px;top:288.5px;font-size:14px;line-height:14px;color:#1a1a1a;transform:scaleX(0.931);transform-origin:100% 50%;">−0.92</div>
<div class="t" style="right:581.5px;top:306.5px;font-size:14px;line-height:14px;color:#1a1a1a;transform:scaleX(0.931);transform-origin:100% 50%;">−0.29</div>
<div class="t" style="right:581.5px;top:324.5px;font-size:14px;line-height:14px;color:#1a1a1a;transform:scaleX(0.959);transform-origin:100% 50%;">0.446791</div>
<div class="t" style="right:581.5px;top:342.5px;font-size:14px;line-height:14px;color:#1a1a1a;transform:scaleX(0.898);transform-origin:100% 50%;">0</div>
<div class="a" style="left:406px;top:212px;width:478px;height:388px;background:#f0f0f0;border:1px solid #5f5f5f;box-shadow:0 3px 16px 0 rgba(0,0,0,.38)"></div>
<div class="a" style="left:407px;top:213px;width:476px;height:30px;background:#fff"></div>
<div class="a" style="left:413px;top:258px;width:463px;height:153px;border:1px solid #dcdcdc"></div>
<div class="a" style="left:417px;top:252px;width:51px;height:14px;background:#f0f0f0"></div>
<div class="a" style="left:413px;top:522px;width:464px;height:1px;background:#dadada"></div>
<div class="a" style="left:462px;top:274px;width:198px;height:23px;background:#fff;border:1px solid #abadb3"></div>
<div class="a" style="left:638px;top:274px;width:22px;height:23px;background:#dddddd;border:1px solid #abadb3"></div>
<div class="a" style="left:641px;top:278px;width:15.500px;height:13px;background:#fff"></div>
<div class="a" style="left:462px;top:301px;width:198px;height:23px;background:#fff;border:1px solid #abadb3"></div>
<div class="a" style="left:638px;top:301px;width:22px;height:23px;background:#dddddd;border:1px solid #abadb3"></div>
<div class="a" style="left:641px;top:305px;width:15.500px;height:13px;background:#fff"></div>
<div class="a" style="left:462px;top:328px;width:198px;height:23px;background:#fff;border:1px solid #abadb3"></div>
<div class="a" style="left:638px;top:328px;width:22px;height:23px;background:#dddddd;border:1px solid #abadb3"></div>
<div class="a" style="left:641px;top:332px;width:15.500px;height:13px;background:#fff"></div>
<div class="a" style="left:462px;top:355px;width:198px;height:23px;background:#fff;border:1px solid #abadb3"></div>
<div class="a" style="left:638px;top:355px;width:22px;height:23px;background:#dddddd;border:1px solid #abadb3"></div>
<div class="a" style="left:641px;top:359px;width:15.500px;height:13px;background:#fff"></div>
<div class="a" style="left:462px;top:382px;width:198px;height:23px;background:#fff;border:1px solid #abadb3"></div>
<div class="a" style="left:638px;top:382px;width:22px;height:23px;background:#dddddd;border:1px solid #abadb3"></div>
<div class="a" style="left:641px;top:386px;width:15.500px;height:13px;background:#fff"></div>
<div class="a" style="left:466px;top:277px;width:17px;height:15px;background:#c8c8c8"></div>
<svg style="left:400px;top:205px" width="500" height="400" viewBox="400 205 500 400">
<path d="M855 222l10 10M865 222l-10 10" stroke="#111" stroke-width="1.100" fill="none"/>
<path d="M648.200 280.5V287.3" stroke="#000" stroke-width="2" fill="none"/><path d="M644.500 283.8l3.700-3.800 3.700 3.800" stroke="#000" stroke-width="2.200" fill="none"/>
<path d="M644 288.8H652" stroke="#000" stroke-width="1" fill="none"/>
<path d="M648.200 307.5V314.3" stroke="#000" stroke-width="2" fill="none"/><path d="M644.500 310.8l3.700-3.800 3.700 3.800" stroke="#000" stroke-width="2.200" fill="none"/>
<path d="M644 315.8H652" stroke="#000" stroke-width="1" fill="none"/>
<path d="M648.200 334.5V341.3" stroke="#000" stroke-width="2" fill="none"/><path d="M644.500 337.8l3.700-3.800 3.700 3.800" stroke="#000" stroke-width="2.200" fill="none"/>
<path d="M644 342.8H652" stroke="#000" stroke-width="1" fill="none"/>
<path d="M648.200 361.5V368.3" stroke="#000" stroke-width="2" fill="none"/><path d="M644.500 364.8l3.700-3.800 3.700 3.800" stroke="#000" stroke-width="2.200" fill="none"/>
<path d="M644 369.8H652" stroke="#000" stroke-width="1" fill="none"/>
<path d="M648.200 388.5V395.3" stroke="#000" stroke-width="2" fill="none"/><path d="M644.500 391.8l3.700-3.800 3.700 3.800" stroke="#000" stroke-width="2.200" fill="none"/>
<path d="M644 396.8H652" stroke="#000" stroke-width="1" fill="none"/>
<rect x="719" y="566" width="72" height="23" fill="#e1e1e1" stroke="#0078d7" stroke-width="2"/>
<rect x="802.500" y="565.500" width="73" height="24" fill="#e1e1e1" stroke="#adadad" stroke-width="1"/>
<path d="M413.300 583.500H512.700" stroke="#0066cc" stroke-width="1" fill="none"/>
</svg>
<div class="t" style="left:415.6px;top:222.1px;font-size:12px;line-height:12px;color:#000;transform:scaleX(0.95);transform-origin:0 50%;">関数の引数</div>
<div class="t" style="left:812.5px;top:220px;font-size:14px;line-height:14px;color:#000;transform:scaleX(0.78);transform-origin:0 50%;font-family:'DejaVu Sans','Noto Sans CJK JP',sans-serif;">?</div>
<div class="t" style="left:419.8px;top:252.4px;font-size:12.8px;line-height:12.8px;color:#000;letter-spacing:-0.52px;transform:scaleX(0.957);transform-origin:0 50%;font-family:'DejaVu Sans','Noto Sans CJK JP',sans-serif;">WDsysv</div>
<div class="t" style="right:512.6px;top:279.8px;font-size:12.8px;line-height:12.8px;color:#000;transform:scaleX(0.9);transform-origin:100% 50%;font-family:'DejaVu Sans','Noto Sans CJK JP',sans-serif;">Uplo</div>
<div class="t" style="left:466.7px;top:279px;font-size:12.8px;line-height:12.8px;color:#000;letter-spacing:-0.881px;transform:scaleX(0.892);transform-origin:0 50%;font-family:'DejaVu Sans','Noto Sans CJK JP',sans-serif;">"L"</div>
<div class="t" style="left:670px;top:282.35px;font-size:8.5px;line-height:8.5px;color:#000;transform:scaleX(1.095);transform-origin:0 50%;font-family:'DejaVu Sans','Noto Sans CJK JP',sans-serif;font-weight:bold;">=</div>
<div class="t" style="left:688.6px;top:279.1px;font-size:12.8px;line-height:12.8px;color:#000;letter-spacing:-0.521px;transform:scaleX(0.94);transform-origin:0 50%;font-family:'DejaVu Sans','Noto Sans CJK JP',sans-serif;">"L"</div>
<div class="t" style="right:512.6px;top:306.8px;font-size:12.8px;line-height:12.8px;color:#000;transform:scaleX(0.929);transform-origin:100% 50%;font-family:'DejaVu Sans','Noto Sans CJK JP',sans-serif;">N</div>
<div class="t" style="left:466.7px;top:306px;font-size:12.8px;line-height:12.8px;color:#000;transform:scaleX(0.932);transform-origin:0 50%;font-family:'DejaVu Sans','Noto Sans CJK JP',sans-serif;">3</div>
<div class="t" style="left:670px;top:309.35px;font-size:8.5px;line-height:8.5px;color:#000;transform:scaleX(1.095);transform-origin:0 50%;font-family:'DejaVu Sans','Noto Sans CJK JP',sans-serif;font-weight:bold;">=</div>
<div class="t" style="left:688.6px;top:306.1px;font-size:12.8px;line-height:12.8px;color:#000;transform:scaleX(0.932);transform-origin:0 50%;font-family:'DejaVu Sans','Noto Sans CJK JP',sans-serif;">3</div>
<div class="t" style="right:512.6px;top:333.8px;font-size:12.8px;line-height:12.8px;color:#000;transform:scaleX(0.913);transform-origin:100% 50%;font-family:'DejaVu Sans','Noto Sans CJK JP',sans-serif;">A</div>
<div class="t" style="left:466.7px;top:333px;font-size:12.8px;line-height:12.8px;color:#000;letter-spacing:-0.516px;transform:scaleX(0.952);transform-origin:0 50%;font-family:'DejaVu Sans','Noto Sans CJK JP',sans-serif;">A3:C5</div>
<div class="t" style="left:670px;top:336.35px;font-size:8.5px;line-height:8.5px;color:#000;transform:scaleX(1.095);transform-origin:0 50%;font-family:'DejaVu Sans','Noto Sans CJK JP',sans-serif;font-weight:bold;">=</div>
<div class="t" style="left:688.6px;top:333.1px;font-size:12.8px;line-height:12.8px;color:#000;transform:scaleX(0.909);transform-origin:0 50%;font-family:'DejaVu Sans','Noto Sans CJK JP',sans-serif;">{2.2,0,0;-0.11,2.93,0;-0.32,0...</div>
<div class="t" style="right:512.6px;top:360.8px;font-size:12.8px;line-height:12.8px;color:#000;transform:scaleX(0.865);transform-origin:100% 50%;font-family:'DejaVu Sans','Noto Sans CJK JP',sans-serif;">B</div>
<div class="t" style="left:466.7px;top:360px;font-size:12.8px;line-height:12.8px;color:#000;letter-spacing:-0.494px;transform:scaleX(0.957);transform-origin:0 50%;font-family:'DejaVu Sans','Noto Sans CJK JP',sans-serif;">D3:D5</div>
<div class="t" style="left:670px;top:363.35px;font-size:8.5px;line-height:8.5px;color:#000;transform:scaleX(1.095);transform-origin:0 50%;font-family:'DejaVu Sans','Noto Sans CJK JP',sans-serif;font-weight:bold;">=</div>
<div class="t" style="left:688.6px;top:360.1px;font-size:12.8px;line-height:12.8px;color:#000;letter-spacing:-0.416px;transform:scaleX(0.957);transform-origin:0 50%;font-family:'DejaVu Sans','Noto Sans CJK JP',sans-serif;">{-1.566;-2.8425;-1.1765}</div>
<div class="t" style="right:512.6px;top:387.8px;font-size:12.8px;line-height:12.8px;color:#000;transform:scaleX(0.919);transform-origin:100% 50%;font-family:'DejaVu Sans','Noto Sans CJK JP',sans-serif;">Nrhs</div>
<div class="t" style="left:670px;top:390.35px;font-size:8.5px;line-height:8.5px;color:#000;transform:scaleX(1.095);transform-origin:0 50%;font-family:'DejaVu Sans','Noto Sans CJK JP',sans-serif;font-weight:bold;">=</div>
<div class="t" style="left:670px;top:421.75px;font-size:8.5px;line-height:8.5px;color:#000;transform:scaleX(1.095);transform-origin:0 50%;font-family:'DejaVu Sans','Noto Sans CJK JP',sans-serif;font-weight:bold;">=</div>
<div class="t" style="left:688.6px;top:419px;font-size:12.8px;line-height:12.8px;color:#000;transform:scaleX(0.911);transform-origin:0 50%;font-family:'DejaVu Sans','Noto Sans CJK JP',sans-serif;">{-0.8;-0.92;-0.29;0.4467910...</div>
<div class="t" style="left:413.2px;top:437.6px;font-size:12px;line-height:12px;color:#000;transform:scaleX(0.992);transform-origin:0 50%;font-family:'DejaVu Sans','Noto Sans CJK JP',sans-serif;">連立一次方程式 AX = B の解 (対称行列)</div>
<div class="t" style="left:585.6px;top:465.4px;font-size:12.8px;line-height:12.8px;color:#000;letter-spacing:-0.551px;transform:scaleX(0.945);transform-origin:0 50%;font-family:'DejaVu Sans','Noto Sans CJK JP',sans-serif;">Uplo</div>
<div class="t" style="left:616.5px;top:465.6px;font-size:12px;line-height:12px;color:#000;transform:scaleX(0.972);transform-origin:0 50%;font-family:'DejaVu Sans','Noto Sans CJK JP',sans-serif;">：上三角/下三角指定 (U または L)</div>
<div class="t" style="left:413.3px;top:538.8px;font-size:12px;line-height:12px;color:#000;transform:scaleX(0.958);transform-origin:0 50%;font-family:'DejaVu Sans','Noto Sans CJK JP',sans-serif;">数式の結果</div>
<div class="t" style="left:476px;top:541.35px;font-size:8.5px;line-height:8.5px;color:#000;transform:scaleX(1.095);transform-origin:0 50%;font-family:'DejaVu Sans','Noto Sans CJK JP',sans-serif;font-weight:bold;">=</div>
<div class="t" style="left:494.7px;top:538.4px;font-size:12.8px;line-height:12.8px;color:#000;letter-spacing:-0.418px;transform:scaleX(0.952);transform-origin:0 50%;font-family:'DejaVu Sans','Noto Sans CJK JP',sans-serif;">-0.8</div>
<div class="t" style="left:412.8px;top:572px;font-size:12px;line-height:12px;color:#0066cc;letter-spacing:-0.79px;transform:scaleX(0.945);transform-origin:0 50%;font-family:'DejaVu Sans','Noto Sans CJK JP',sans-serif;">この関数のヘルプ(H)</div>
<div class="t" style="left:746px;top:572.2px;font-size:12.8px;line-height:12.8px;color:#000;transform:scaleX(0.926);transform-origin:0 50%;font-family:'DejaVu Sans','Noto Sans CJK JP',sans-serif;">OK</div>
<div class="t" style="left:813.8px;top:571.6px;font-size:12px;line-height:12px;color:#000;letter-spacing:-1.586px;transform:scaleX(0.899);transform-origin:0 50%;font-family:'DejaVu Sans','Noto Sans CJK JP',sans-serif;">キャンセル</div>
</body>
</html>
